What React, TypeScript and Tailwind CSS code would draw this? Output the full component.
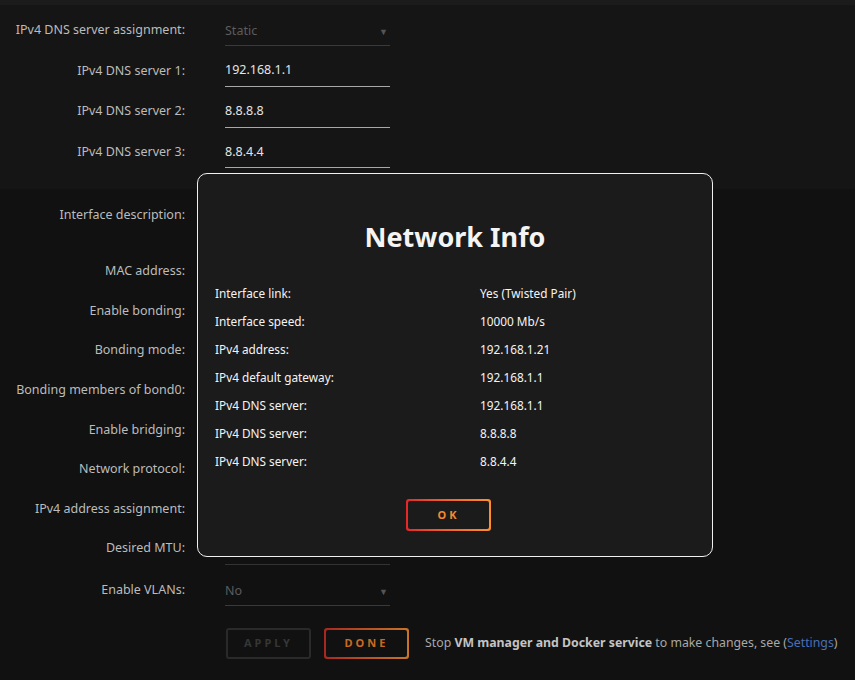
import type { ReactNode } from "react";

const font = { fontFamily: '"Noto Sans", "Liberation Sans", sans-serif' };

function Row({ label, children, h = "h-[40.7px]" }: { label: string; children?: ReactNode; h?: string }) {
    return (
        <div className={`flex items-center ${h}`}>
            <div className="w-[185px] shrink-0 whitespace-nowrap text-right text-[12.5px] text-[#bcbcbc]">{label}</div>
            <div className="ml-[40px] w-[165px]">{children}</div>
        </div>
    );
}

function TextField({ value }: { value: string }) {
    return (
        <div className="mt-[2px] flex h-[30px] items-center border-b border-[#a8a8a8] pb-[2px] text-[12.5px] text-[#e4e4e4]">
            {value}
        </div>
    );
}

function SelectField({ value }: { value: string }) {
    return (
        <div className="mt-[2px] flex h-[30px] items-center justify-between border-b border-[#3a3a3a] pt-[2px] text-[12.5px] text-[#5c5c5c]">
            <span>{value}</span>
            <span className="mr-[2px] text-[9px] text-[#555]">▼</span>
        </div>
    );
}

function BlankField({ line = false }: { line?: boolean }) {
    return <div className={`mt-[2px] h-[30px] ${line ? "border-b border-[#333]" : ""}`} />;
}

const info: [string, string][] = [
    ["Interface link:", "Yes (Twisted Pair)"],
    ["Interface speed:", "10000 Mb/s"],
    ["IPv4 address:", "192.168.1.21"],
    ["IPv4 default gateway:", "192.168.1.1"],
    ["IPv4 DNS server:", "192.168.1.1"],
    ["IPv4 DNS server:", "8.8.8.8"],
    ["IPv4 DNS server:", "8.8.4.4"],
];

export default function App() {
    return (
        <div className="relative h-[680px] w-[855px] overflow-hidden bg-[#111111]" style={font}>
            <div className="h-[5px] bg-[#1b1b1b]" />

            {/* DNS settings block */}
            <div className="bg-[#151515] pt-[5px] pb-[16px]">
                <Row label="IPv4 DNS server assignment:">
                    <SelectField value="Static" />
                </Row>
                <Row label="IPv4 DNS server 1:">
                    <TextField value="192.168.1.1" />
                </Row>
                <Row label="IPv4 DNS server 2:">
                    <TextField value="8.8.8.8" />
                </Row>
                <Row label="IPv4 DNS server 3:">
                    <TextField value="8.8.4.4" />
                </Row>
            </div>

            {/* interface settings, mostly covered by the dialog */}
            <div className="pt-[7px]">
                <Row label="Interface description:" h="h-[40px]">
                    <BlankField />
                </Row>
                <div className="h-[16px]" />
                <Row label="MAC address:" h="h-[39.6px]"><BlankField /></Row>
                <Row label="Enable bonding:" h="h-[39.6px]"><BlankField /></Row>
                <Row label="Bonding mode:" h="h-[39.6px]"><BlankField /></Row>
                <Row label="Bonding members of bond0:" h="h-[39.6px]"><BlankField /></Row>
                <Row label="Enable bridging:" h="h-[39.6px]"><BlankField /></Row>
                <Row label="Network protocol:" h="h-[39.6px]"><BlankField /></Row>
                <Row label="IPv4 address assignment:" h="h-[39.6px]"><BlankField /></Row>
                <Row label="Desired MTU:" h="h-[39.6px]"><BlankField line /></Row>
                <Row label="Enable VLANs:" h="h-[43px]">
                    <SelectField value="No" />
                </Row>

                <div className="ml-[226px] mt-[16px] flex items-center">
                    <div className="flex h-[31px] w-[85px] items-center justify-center rounded-[3px] border-2 border-[#2a2a2a] text-[11px] font-bold tracking-[3px] text-[#363636]">
                        APPLY
                    </div>
                    <div className="ml-[13px] rounded-[3px] bg-gradient-to-r from-[#a82620] to-[#c8742a] p-[2px]">
                        <div className="flex h-[27px] w-[81px] items-center justify-center rounded-[2px] bg-[#111111] text-[11px] font-bold tracking-[3px] text-[#c86a22]">
                            DONE
                        </div>
                    </div>
                    <div className="ml-[16px] whitespace-nowrap text-[12.3px] text-[#a8a8a8]">
                        Stop <span className="font-bold text-[#c4c4c4]">VM manager and Docker service</span> to make changes, see (<span className="text-[#4a6fb8]">Settings</span>)
                    </div>
                </div>
            </div>

            {/* Network Info dialog */}
            <div className="absolute left-[197px] top-[173px] flex h-[384px] w-[516px] flex-col rounded-[10px] border-[1.5px] border-[#f0f0f0] bg-[#1c1b1c] text-[#f4f4f4]">
                <h2 className="mt-[44px] text-center text-[27px] font-bold leading-[38px]">Network Info</h2>
                <div className="mt-[24px] flex flex-col pl-[17px]">
                    {info.map(([k, v], i) => (
                        <div key={i} className="flex h-[28px] items-center text-[11.8px]">
                            <div className="w-[265px]">{k}</div>
                            <div>{v}</div>
                        </div>
                    ))}
                </div>
                <div className="mt-[23px] ml-[208px] w-fit rounded-[3px] bg-gradient-to-r from-[#e5262a] to-[#ff8e2e] p-[2px]">
                    <div className="flex h-[28px] w-[81px] items-center justify-center rounded-[2px] bg-[#1c1b1c] text-[11px] font-bold tracking-[3px] text-[#f2892f]">
                        OK
                    </div>
                </div>
            </div>
        </div>
    );
}
